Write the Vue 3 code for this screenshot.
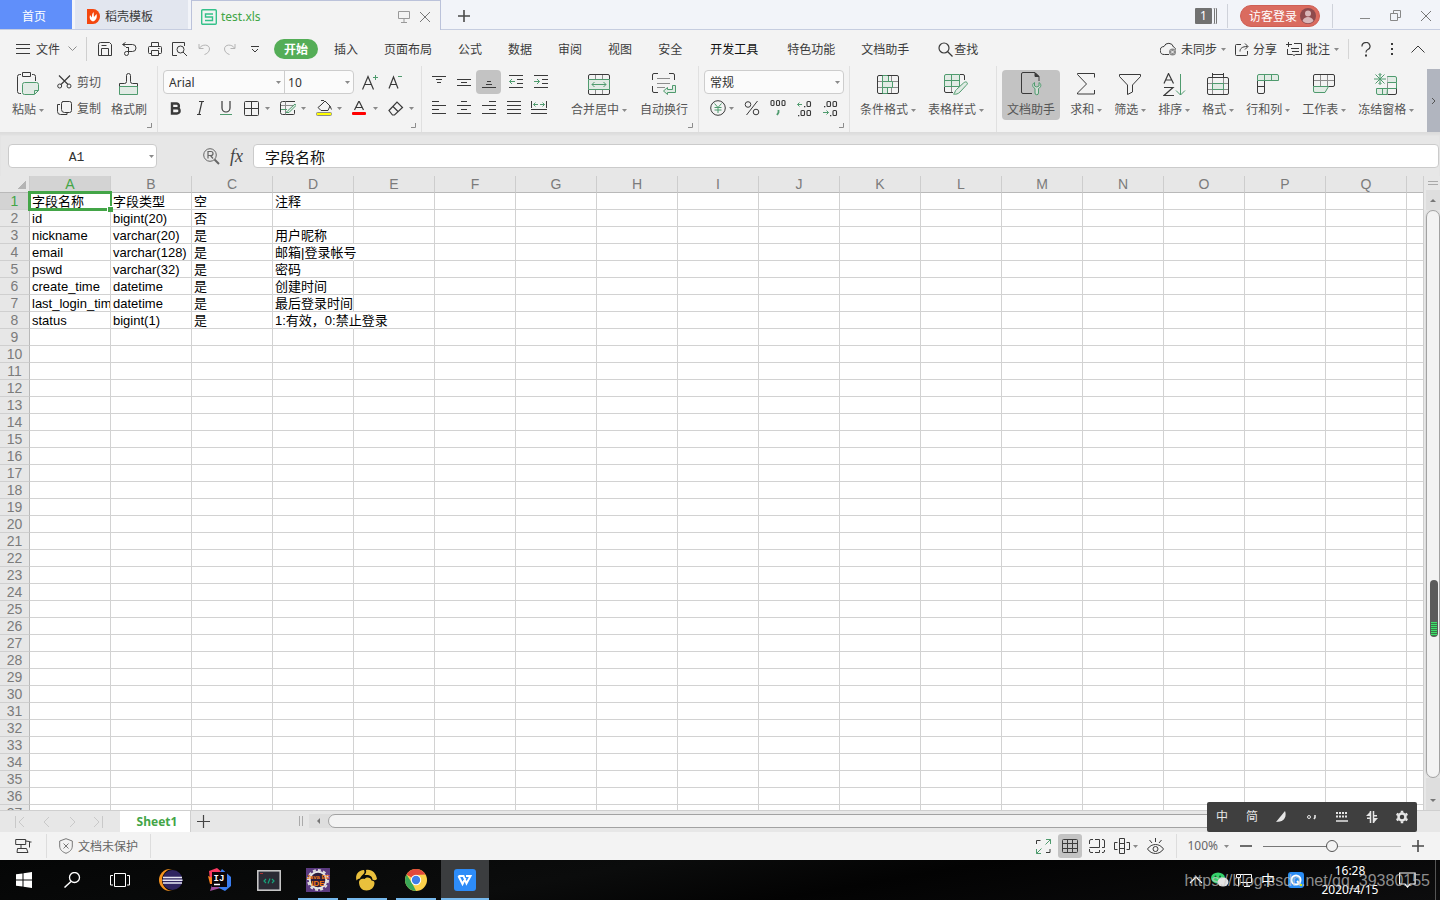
<script setup>
import { h, ref } from 'vue'

const K = '#3a3a3a'
const G = '#4f9b6e'
const F = '#e2ebe5'
const M = '#8c8c8c'

const icons = {
  burger: [14, 10, `<path d="M0 .5h14M0 4.500h14M0 9.500h14"/>`],
  down: [9, 6, `<path stroke="${M}" d="M.5.5l4 4 4-4"/>`],
  save: [14, 14, `<path d="M2.500.5h9l2 2v11h-13v-11a2 2 0 0 1 2-2zM3.500 13.500v-7h7v7M3.500 3.500h5"/>`],
  output: [15, 14, `<path d="M1 2.500h9.500a3 3 0 0 1 0 7H6M3.500.5l-3 2 3 2M6.500 5v6.500a2 2 0 1 1-2-2h2M4 5.500h3"/>`],
  print: [14, 14, `<path d="M3.500 4V.5h7V4M3.500 11.500h-2a1 1 0 0 1-1-1v-5a1 1 0 0 1 1-1h11a1 1 0 0 1 1 1v5a1 1 0 0 1-1 1h-2M3.500 8.500h7v5h-7zM10 6.500h1.500"/>`],
  preview: [16, 14, `<path d="M5 13.500H.5V.5h12V4"/><circle cx="8.500" cy="7.500" r="3.500"/><path d="M11 10l4 4"/>`],
  undo: [13, 12, `<path stroke="#b4b4b4" d="M1 1v4.500h4.500M1.500 5C4 1 11.500 1 11.500 6c0 3-3 5-5 5.500"/>`],
  redo: [13, 12, `<path stroke="#b4b4b4" d="M12 1v4.500H7.500M11.500 5C9 1 1.500 1 1.500 6c0 3 3 5 5 5.500"/>`],
  more: [8, 7, `<path d="M0 .5h8M1 3l3 3 3-3"/>`],
  search: [15, 15, `<circle cx="6" cy="6" r="5" stroke-width="1.200"/><path stroke-width="1.200" d="M9.500 9.500l5 5"/>`],
  cloud: [17, 14, `<path d="M9 12.500H4.500a4 4 0 0 1-.5-8A5 5 0 0 1 13.500 5c1.500.5 2 1.500 2 2.500"/><circle cx="12.500" cy="10" r="3.500" fill="#8a8a8a" stroke="none"/><path stroke="#fff" d="M11 8.500l3 3m0-3l-3 3"/>`],
  share: [14, 13, `<path d="M6 1.500H1.500a1 1 0 0 0-1 1v9a1 1 0 0 0 1 1h10a1 1 0 0 0 1-1V8M5 8.500c0-3 2-5 7.500-5M10 .5l3 3-3 3"/>`],
  comment: [16, 14, `<path d="M0 2.500h6M2.500 0v5M8 1.500h7.500v11h-6l-1.500 1-1.500-1H1.500V7M5 6.500h8M6 9.500h7"/>`],
  dots: [4, 12, `<g fill="${K}" stroke="none"><rect x="1" y="0" width="2" height="2"/><rect x="1" y="5" width="2" height="2"/><rect x="1" y="10" width="2" height="2"/></g>`],
  up: [14, 8, `<path d="M.5 7.500l6.500-6.500 6.500 6.500"/>`],
  help: [10, 15, `<path stroke-width="1.200" d="M1 4.500a4 3.800 0 1 1 5.500 3.300Q5 8.500 5 10.500"/><rect x="4" y="12.500" width="2" height="2" fill="${K}" stroke="none"/>`],
  paste: [23, 24, `<path d="M4 2.500H2.500a2 2 0 0 0-2 2v15a2 2 0 0 0 2 2H4M15 2.500h1.500a2 2 0 0 1 2 2V9M5.500.5h8v4h-8z"/><path stroke="${G}" fill="${F}" d="M7.500 10.500h12a2 2 0 0 1 2 2v6l-4 4h-10a2 2 0 0 1-2-2v-8a2 2 0 0 1 2-2zM17.500 22v-3.500h4"/>`],
  cut: [15, 14, `<path stroke-width="1.200" d="M2 .5l9 9M13 .5l-9 9"/><circle cx="2.700" cy="11" r="2"/><circle cx="12" cy="11" r="2"/>`],
  copy: [15, 15, `<path d="M5.500.5h7a2 2 0 0 1 2 2v7a2 2 0 0 1-2 2h-5a3 3 0 0 1-3-3v-6a2 2 0 0 1 2-2M3 3.500H.5v7a3 3 0 0 0 3 3H10V12"/>`],
  brush: [20, 23, `<path fill="${F}" stroke="${G}" d="M.5 13.500h18v8h-18z"/><path d="M.5 13.500v-3h5a2 2 0 0 0 2-2v-6a2 2 0 0 1 4 0v6a2 2 0 0 0 2 2h5v3"/><path stroke="${G}" d="M.5 13.500h18"/>`],
  fontup: [18, 17, `<path stroke-width="1.200" d="M.5 15.500L6 2.500l5.500 13M2.500 10.500h7"/><path stroke="${G}" d="M11 3.500h5M13.500 1v5"/>`],
  fontdown: [16, 17, `<path stroke-width="1.200" d="M1 14.500L5.500 3l4.500 11.500M2.500 10.500h6"/><path stroke="${G}" d="M10 2.500h4"/>`],
  bold: [11, 13, `<path stroke-width="2.400" d="M2 1.500h4.500a2.300 2.300 0 0 1 0 4.800H2zM2 6.300h5a2.600 2.600 0 0 1 0 5.200H2z"/>`],
  italic: [9, 14, `<path stroke-width="1.200" d="M3 .5h5M1 13.500h4M6 .5l-3 13"/>`],
  underline: [12, 15, `<path stroke-width="1.200" d="M2 0v7a4 4 0 0 0 8 0V0"/><path stroke="${G}" d="M0 13.500h12"/>`],
  border: [16, 15, `<rect x=".5" y=".5" width="14" height="14" rx="1"/><path d="M7.500.5v14M.5 7.500h14"/>`],
  tstyle: [16, 15, `<path d="M15 .5H2.500a2 2 0 0 0-2 2v9a2 2 0 0 0 2 2h11a1 1 0 0 0 1-1V9"/><path stroke="${M}" d="M5.500.5v13M1 4.500h13"/><path stroke="${G}" fill="${F}" d="M1 8.500h6M6 11.500h3l7-7-1-1.500-7 6.500z"/>`],
  fill: [16, 16, `<rect x=".5" y="12.500" width="15" height="3" rx="1" fill="#ff0" stroke="${M}"/><path d="M5 5l4-4 5 5-2 4.500H5L2 7.500zM5 .5h3M14 6l1.500 3.500"/>`],
  color: [14, 15, `<path stroke-width="1.200" d="M2.500 9L7 0l4.500 9M4 6.500h6"/><rect x="0" y="11" width="14" height="3" rx="1" fill="#f00" stroke="none"/>`],
  eraser: [16, 15, `<path stroke-width="1.200" d="M1 9.500l8-8.500 5.500 5.500-8 7.500H4.500zM5 5.500l5.500 5.500"/>`],
  atop: [14, 14, `<path d="M0 1.500h14M4 4.500h6M5 7.500h4"/>`],
  amid: [14, 14, `<path d="M0 4.500h14M4 7.500h6M0 10.500h14"/>`],
  abot: [14, 14, `<path d="M5 6.500h4M4 9.500h6M0 12.500h14"/>`],
  outdent: [15, 14, `<path d="M0 .5h14M8 4.500h6M8 8.500h6M0 12.500h14"/><path stroke="${G}" d="M6 6.500H.5M3 4l-2.500 2.500L3 9"/>`],
  indent: [15, 14, `<path d="M0 .5h14M8 4.500h6M8 8.500h6M0 12.500h14"/><path stroke="${G}" d="M0 6.500h5.500M3 4l2.500 2.500L3 9"/>`],
  left: [14, 14, `<path d="M0 .5h7M0 4.500h14M0 8.500h7M0 12.500h14"/>`],
  center: [14, 14, `<path d="M4 .5h6M0 4.500h14M4 8.500h6M0 12.500h14"/>`],
  right: [14, 14, `<path d="M7 .5h7M0 4.500h14M7 8.500h7M0 12.500h14"/>`],
  justify: [14, 14, `<path d="M0 .5h14M0 4.500h14M0 8.500h14M0 12.500h14"/>`],
  spread: [16, 14, `<path d="M.5 0v7M15.500 0v7M0 8.500h16M0 12.500h16"/><path stroke="${G}" d="M2.500 3.500H7M4.500 1.500l-2 2 2 2M9 3.500h4.500M11.500 1.500l2 2-2 2"/>`],
  merge: [22, 21, `<path d="M.5 5.500V2a1.500 1.500 0 0 1 1.500-1.500h18A1.500 1.500 0 0 1 21.500 2v3.500M.5 15.500V19a1.500 1.500 0 0 0 1.500 1.500h18a1.500 1.500 0 0 0 1.500-1.500v-3.500"/><path stroke="${M}" d="M7.500 1v4M14.500 1v4M7.500 16v4M14.500 16v4"/><path stroke="${G}" fill="${F}" d="M.5 5.500h21v10H.5zM4 10.500h14M6.500 8L4 10.500 6.500 13M15.500 8l2.500 2.500-2.500 2.500"/>`],
  wrap: [24, 22, `<path d="M.5 7V2A1.500 1.500 0 0 1 2 .5h4M17 .5h4A1.500 1.500 0 0 1 22.500 2v5M.5 13v5A1.500 1.500 0 0 0 2 19.500h4"/><path stroke="${M}" d="M5 5.500h13M5 10.500h13M5 14.500h8"/><path stroke="${G}" fill="${F}" d="M20.500 12.500h3v7h-8v2l-4-3.500 4-3.500v2h5z"/>`],
  yen: [16, 16, `<circle cx="8" cy="8" r="7.300"/><path stroke="${G}" d="M4.500 3.500L8 7.500l3.500-4M8 7.500v5.500M4.500 7.500h7M4.500 10h7"/>`],
  percent: [16, 16, `<circle cx="4" cy="4.500" r="2.800"/><circle cx="12" cy="12" r="2.800"/><path d="M13.500 1l-11 14"/>`],
  thousand: [16, 18, `<g stroke-width="1.100"><rect x="1" y="1.500" width="3" height="5" rx="1"/><rect x="6.500" y="1.500" width="3" height="5" rx="1"/><rect x="12" y="1.500" width="3" height="5" rx="1"/></g><path stroke="${G}" stroke-width="1.800" d="M8.500 11v2.500L7 16"/>`],
  decup: [16, 17, `<path stroke="${G}" d="M1.500 4.500H6M3.500 2.500l-2 2 2 2"/><g stroke-width="1.100"><rect x="11" y="1.500" width="3.500" height="5" rx="1"/><rect x="5" y="10.500" width="3.500" height="5" rx="1"/><rect x="11" y="10.500" width="3.500" height="5" rx="1"/></g><g fill="${K}" stroke="none"><rect x="8" y="6" width="1.300" height="1.300"/><rect x="2" y="15" width="1.300" height="1.300"/></g>`],
  decdown: [16, 17, `<path stroke="${G}" d="M1 12.500h5.500M4.500 10.500l2 2-2 2"/><g stroke-width="1.100"><rect x="11" y="10.500" width="3.500" height="5" rx="1"/><rect x="5" y="1.500" width="3.500" height="5" rx="1"/><rect x="11" y="1.500" width="3.500" height="5" rx="1"/></g><g fill="${K}" stroke="none"><rect x="8" y="15" width="1.300" height="1.300"/><rect x="2" y="6" width="1.300" height="1.300"/></g>`],
  cond: [22, 19, `<path stroke="${M}" d="M14.500 1v17M1 6.500h20M1 12.500h20"/><path fill="${F}" stroke="${G}" d="M5.500.5h6v6h-6zM5.500 6.500h10v6h-10zM5.500 12.500h5v6h-5z"/><rect x=".5" y=".5" width="21" height="18" rx="1.500"/><path stroke="${G}" d="M5.500.5h5M5.500 18.500h5"/>`],
  tfmt: [24, 21, `<path d="M16 .5h3a1.500 1.500 0 0 1 1.500 1.500v4M.5 13v4A1.500 1.500 0 0 0 2 18.500h7"/><path stroke="${G}" fill="${F}" d="M15.500.5v12H.5V2A1.500 1.500 0 0 1 2 .5zM7.500.5v12M.5 6.500h15"/><path stroke="${M}" d="M7.500 13v5"/><path stroke="${G}" fill="${F}" d="M23 8.500c1 1 0 2-1 3l-6 6.500c-2 2-4 2.500-6.500 2 2-1 1-3 3-4.500l7-6.500c1.500-1.200 2.500-1.500 3.500-.5z"/>`],
  dochelp: [21, 24, `<path d="M11 21.500H2a1.500 1.500 0 0 1-1.500-1.500V2A1.500 1.500 0 0 1 2 .5h12l4 4V9"/><path fill="${K}" d="M14 1v3.500h4z"/><path stroke="${G}" fill="#d3ddd6" d="M13.500 10.500c-2.500 1.500-2.500 4.500.5 6v4.500a1.700 1.700 0 0 0 3.500 0v-4.500c3-1.500 3-4.500.5-6v3.500l-2.200 1-2.300-1z"/>`],
  sum: [18, 22, `<path d="M17.500 4.500V.5H.5v1l9 9.500-9 9v1h17V17"/>`],
  filter: [22, 21, `<path d="M.5.5h21v2l-8 8.500v7l-5 2.500V11l-8-8.500z"/>`],
  sort: [23, 23, `<path stroke-width="1.200" d="M1 10.500L5.500.5l5 10M2.500 7h6.500M1 14.500h9L1 22.500h10"/><path stroke="${G}" d="M17.500 1v21M13 17.500l4.500 4.500 4.500-4.500"/>`],
  fmt: [22, 22, `<path d="M5.500 0v4M16.500 0v4M5 1.500h12"/><path stroke="${M}" d="M5.500 5v16M16.500 5v16M1 10.500h20M1 16.500h20"/><rect x=".5" y="4.500" width="21" height="17" rx="1.500"/><rect x="5.500" y="10.500" width="11" height="6" stroke="${G}" fill="${F}"/>`],
  rowcol: [22, 20, `<path d="M.5 6.500V18A1.500 1.500 0 0 0 2 19.500h4A1.500 1.500 0 0 0 7.500 18V7M.5 12.500h7"/><path stroke="${G}" fill="${F}" d="M2 .5h18A1.500 1.500 0 0 1 21.500 2v4.500H.5V2A1.500 1.500 0 0 1 2 .5zM7.500.5v6M14.500.5v6"/>`],
  sheet: [22, 20, `<path stroke="${M}" d="M7.500 1v11M14.500 1v11M1 6.500h20"/><path d="M.5 12.500V2A1.500 1.500 0 0 1 2 .5h18A1.500 1.500 0 0 1 21.500 2v9a1.500 1.500 0 0 1-1.500 1.500h-5"/><path stroke="${G}" fill="${F}" d="M.5 12.500h15l-3.500 6H2A1.500 1.500 0 0 1 .5 17z"/>`],
  freeze: [24, 23, `<path stroke="${M}" d="M13.500 3v18M13 9.500h9"/><path d="M13.500 21.500H21a1.500 1.500 0 0 0 1.500-1.500v-5"/><path stroke="${G}" fill="${F}" d="M13.500 3.500H21A1.500 1.500 0 0 1 22.500 5v4.500h-9M13.500 15.500h-11V20A1.500 1.500 0 0 0 4 21.500h9zM8.500 15.500v6"/><path stroke="${G}" d="M22.500 9.500v6h-9M6 0v12M0 6h12M1.500 1.500l9 9M10.500 1.500l-9 9M4.500 1L6 2.500 7.500 1M4.500 11L6 9.500 7.500 11"/>`],
  template: [13, 15, `<path stroke="none" fill="#f4470f" d="M0 0h6a7 7.500 0 0 1 0 15H0z"/><path stroke="none" fill="#fff" d="M6 12.500c-3-1-4-3.500-3-6.500l2 2.500c0-2 0-4 1.500-5.500.5 2 0 3 .5 5L9.500 5C10.500 8.500 9 11.500 6 12.500z"/>`],
  xls: [16, 16, `<rect x=".7" y=".7" width="14.600" height="14.600" rx="1" stroke="#35c18a" stroke-width="1.400"/><path stroke="#35c18a" stroke-width="1.400" d="M12 5H4.500v3h7v3.500H4"/>`],
  monitor: [12, 12, `<path stroke="#999" d="M.5.5h11v7H.5zM6 8v3M3 11.500h6"/>`],
  close: [12, 12, `<path stroke="#777" d="M1 1l10 10M11 1L1 11"/>`],
  plus: [12, 12, `<path stroke="#4a4a4a" stroke-width="1.600" d="M6 0v12M0 6h12"/>`],
  plusthin: [14, 14, `<path stroke="#444" stroke-width="1.200" d="M6.500 0v13M0 6.500h13"/>`],
  minus: [12, 12, `<path stroke="#4a4a4a" stroke-width="1.600" d="M0 6h12"/>`],
  min: [10, 12, `<path stroke="#888" d="M0 8.500h10"/>`],
  restore: [12, 12, `<path stroke="#888" d="M3.500 3V.5h7v7H8M.5 3.500h7v7h-7z"/>`],
  person: [16, 16, `<circle cx="8" cy="8" r="8" fill="#8e4a4d" stroke="none"/><circle cx="8" cy="5.500" r="3" fill="#d8b6b8" stroke="none"/><path fill="#d8b6b8" stroke="none" d="M2.500 13c1-3 3-4 5.500-4s4.500 1 5.500 4a8 8 0 0 1-11 0z"/>`],
  find: [17, 17, `<circle cx="7" cy="7" r="6.300" stroke="#666"/><path stroke="#666" stroke-width="1.200" d="M5 10.500v-7h3a2 2 0 0 1 0 4H5M7.500 7.500l2.500 3"/><path stroke="#666" stroke-width="2" d="M11.500 11.500l4.500 4.500"/>`],
  caret: [5, 3, `<path fill="#8a8a8a" stroke="none" d="M0 0h5L2.500 3z"/>`],
  next: [6, 8, `<path stroke="#555" d="M1 1l3 3-3 3"/>`],
  corner: [5, 5, `<path stroke="${M}" d="M4.500 0v4.500H0"/>`],
  first: [10, 12, `<path stroke="#c9c9c9" d="M.5 0v12M9 1L4 6l5 5"/>`],
  prev: [7, 12, `<path stroke="#c9c9c9" d="M6 1L1 6l5 5"/>`],
  nextp: [7, 12, `<path stroke="#c9c9c9" d="M1 1l5 5-5 5"/>`],
  last: [10, 12, `<path stroke="#c9c9c9" d="M9.500 0v12M1 1l5 5-5 5"/>`],
  robot: [17, 16, `<path d="M.7 1.500h10v5h-10zM10.500 3l4 .5v6M6 7v3.500M2.500 10.500h9l1.500 4h-11zM14.500 4h2"/>`],
  shield: [14, 16, `<path stroke="#777" d="M7 .7l6.300 2.300v5c0 4-3 6-6.300 7.300C3.700 14 .7 12 .7 8V3zM4.500 5.500l5 5M9.500 5.500l-5 5"/>`],
  full: [15, 15, `<path d="M.5 5V1.500h4M14 10v3.500h-4"/><path stroke="${G}" d="M9.500 5.500l5-5M10 .5h4.500V5M5.500 9.500l-5 5M.5 10v4.500H5"/>`],
  grid: [17, 15, `<rect x=".5" y=".5" width="15" height="13" rx="1"/><path d="M5.500.5v13M10.500.5v13M.5 4.500h15M.5 9.500h15"/>`],
  page: [17, 15, `<path d="M.5 5V2A1.500 1.500 0 0 1 2 .5h2M6 .5h4.500v8H.5M.5 10v2a1.500 1.500 0 0 0 1.500 1.500h2M6 13.500h4.500V11M13 .5h1a1.500 1.500 0 0 1 1.500 1.500v6.500H13M13 13.500h1a1.500 1.500 0 0 0 1.500-1.500v-1"/>`],
  breakv: [17, 16, `<path d="M5.500.5h5v15h-5zM5.500 5.500h5M5.500 10.500h5M3.500 4.500h-3v7h3M12.500 4.500h3v7h-3"/>`],
  eye: [17, 17, `<path d="M.5 11c4-6 12-6 16 0-4 6-12 6-16 0zM8.500 0v4M2.500 2l2.500 3M14.500 2L12 5"/><circle cx="8.500" cy="11" r="2.500"/>`],
  win: [16, 16, `<path fill="#fff" stroke="none" d="M0 2.300l6.500-.9v6.100H0zM7.500 1.200L16 0v7.500H7.500zM0 8.500h6.500v6.100L0 13.700zM7.500 8.500H16V16l-8.500-1.200z"/>`],
  tsearch: [17, 16, `<circle cx="10.500" cy="5.500" r="5" stroke="#fff" stroke-width="1.300"/><path stroke="#fff" stroke-width="1.500" d="M7 9.500L.5 15.500"/>`],
  tview: [21, 15, `<path stroke="#fff" d="M4.500.5h11v13h-11zM3 2.500H.5v9.500H3M17 2.500h2.500v9.500H17"/>`],
  eclipse: [24, 22, `<circle cx="11" cy="11" r="11" fill="#f7931e" stroke="none"/><circle cx="14" cy="11" r="11" fill="#070808" stroke="none"/><circle cx="13.500" cy="11" r="10" fill="#2f2460" stroke="none"/><path stroke="#e6e6f2" stroke-width="1.500" d="M4 8.500h19M3.500 11.300h20M4 14h19"/>`],
  ij: [24, 24, `<g stroke="none"><path fill="#fc3a63" d="M1 3l8-3 7 6-4 6H2z"/><path fill="#fc801d" d="M0 8l8 3v5H2z"/><path fill="#a3509f" d="M5 14h8l3 5-14 4z"/><path fill="#3a7df0" d="M11 6l3-5 9 8v9l-6 5-6-3z"/><rect x="4" y="4" width="15" height="15" fill="#0b0508"/></g><text x="5.500" y="12.500" font-size="9" font-weight="700" fill="#fff" font-family="Liberation Mono" stroke="none">IJ</text><path stroke="#fff" stroke-width="1.500" d="M6 16.500h6"/>`],
  term: [24, 21, `<rect x=".8" y=".8" width="22.400" height="19.400" fill="#2b2b35" stroke="#cfcfcf" stroke-width="1.500"/><path stroke="#a33" d="M3 3.500h3"/><path stroke="#16a37c" stroke-width="1.200" d="M9 9l-2 2 2 2M15 9l2 2-2 2M13 8.500l-2 5"/>`],
  javaee: [24, 24, `<rect width="24" height="24" fill="#5b3a80" stroke="none"/><circle cx="12" cy="12" r="10" stroke="#ddd" stroke-width="2" stroke-dasharray="3 2.200"/><circle cx="12" cy="12" r="8.300" fill="#2a1c3c" stroke="#e5e5e5" stroke-width="2"/><g font-family="Liberation Sans" font-weight="700" fill="#f47b14" stroke="none" text-anchor="middle"><text x="12" y="11" font-size="6">Java EE</text><text x="12" y="18" font-size="8">IDE</text></g>`],
  navicat: [24, 22, `<g stroke="none" fill="#eac03c"><path d="M1.500 11.500C0 5.500 3 1.500 9 1c1 2 .5 3-1 4.500S5 8.500 5 9.500c-1.500 0-2.500.8-3.500 2z"/><path d="M11 1c6-1 10 3 11 9-1.500 1.500-3 1.500-4.500.5C17 7 15 5.500 9.500 6 11 4.500 11.500 3 11 1z"/><path d="M4 13c0-2.500 3-4 5.500-3 1.500-2.500 6.500-2 7 1.500 1.500 0 3 .8 3 2.500 0 4.500-3.500 7.500-8 7.500S4 18 4 13z"/></g>`],
  chrome: [22, 22, `<g stroke="none"><circle cx="11" cy="11" r="11" fill="#fdd24a"/><path fill="#e2483b" d="M11 11L1.500 5.500a11 11 0 0 1 19 0L11 6z"/><path fill="#3aa757" d="M1.500 5.500L7 14l4 8A11 11 0 0 1 1.500 5.500z"/><path fill="#e2483b" d="M1.500 5.500L11 5.500v5z"/><circle cx="11" cy="11" r="5.200" fill="#fff"/><circle cx="11" cy="11" r="4.200" fill="#3f7ee8"/></g>`],
  wps: [22, 22, `<rect width="22" height="22" rx="3" fill="#2d8cf8" stroke="none"/><path stroke="#fff" stroke-width="2" d="M4.500 7h5l3 7.500L16.500 7H12M4.500 7l4 8 3-6"/>`],
  tup: [15, 8, `<path stroke="#fff" stroke-width="1.300" d="M1 7l6-6 6 6"/>`],
  wechat: [18, 16, `<ellipse cx="7" cy="6" rx="7" ry="5.500" fill="#35d26b" stroke="none"/><ellipse cx="12" cy="10" rx="5.500" ry="4.500" fill="#e4e4e4" stroke="none"/><g fill="#145c2e" stroke="none"><circle cx="4.500" cy="4.500" r="1"/><circle cx="9" cy="4.500" r="1"/></g>`],
  net: [17, 15, `<path stroke="#fff" d="M4.500 1.500h11v8h-11M8 13.500h6M11 10v3M.5 1.500h4v3h-4zM2.500 5v8.500"/>`],
  qapp: [16, 16, `<rect width="16" height="16" rx="3" fill="#2a8cf4" stroke="none"/><circle cx="8" cy="8" r="4.500" stroke="#fff" stroke-width="2"/><path stroke="#fff" stroke-width="2" d="M9 9l3 3"/><rect x="12" y="12" width="2" height="2" fill="#d3e623" stroke="none"/>`],
  notify: [17, 16, `<path stroke="#fff" stroke-width="1.200" d="M.6 1h15.500v11H11l-2.500 3L6 12H.6z"/>`],
  moon: [12, 12, `<path fill="#e6e6e6" stroke="none" d="M9 0c2 5-1 10-5 10.500L0 11z"/>`],
  punct: [10, 8, `<circle cx="2" cy="4" r="1.500" stroke="#e6e6e6"/><path stroke="#e6e6e6" stroke-width="1.600" d="M8 2v2.500L7 6"/>`],
  keys: [12, 10, `<path stroke="#e6e6e6" stroke-width="2" stroke-dasharray="2 1" d="M0 1h11M0 4.500h11"/><path stroke="#e6e6e6" stroke-width="1.500" d="M0 9h12"/>`],
  swap: [12, 12, `<path stroke="#e6e6e6" stroke-width="1.500" d="M4.500 0v12M7.500 12V0"/><path stroke="none" fill="#e6e6e6" d="M0 5l4-4v4zM1 6.500h3V8H1zM12 7l-4 4.500V7zM8 4h3v1.500H8z"/>`],
  gear: [14, 14, `<circle cx="7" cy="7" r="3.500" stroke="#e6e6e6" stroke-width="2.500"/><path stroke="#e6e6e6" stroke-width="2.500" d="M7 .8v2M7 11.200v2M1.600 3.900l1.800 1M10.600 9.100l1.800 1M1.600 10.100l1.800-1M10.600 4.900l1.800-1"/>`]
}

const Icon = (props) => {
  const [w, ht, body] = icons[props.n]
  return h('svg', { width: w, height: ht, viewBox: `0 0 ${w} ${ht}`, fill: 'none', stroke: K, innerHTML: body, 'aria-hidden': 'true', class: 'ic' })
}
Icon.props = ['n']

const quick = [['save', '保存'], ['output', '输出'], ['print', '打印'], ['preview', '打印预览'], ['undo', '撤销'], ['redo', '恢复'], ['more', '更多']]
const tabsA = ['插入', '页面布局', '公式', '数据', '审阅', '视图', '安全']
const tabsB = ['特色功能', '文档助手']
const fontBtns = [['border', '边框'], ['tstyle', '单元格样式'], ['fill', '填充颜色'], ['color', '字体颜色'], ['eraser', '清除']]
const alignTop = [['atop', '顶端对齐'], ['amid', '垂直居中'], ['abot', '底端对齐']]
const alignLow = [['left', '左对齐'], ['center', '水平居中'], ['right', '右对齐'], ['justify', '两端对齐'], ['spread', '分散对齐']]
const bigTools = [['sum', '求和'], ['filter', '筛选'], ['sort', '排序'], ['fmt', '格式'], ['rowcol', '行和列'], ['sheet', '工作表'], ['freeze', '冻结窗格']]

const cols = 'ABCDEFGHIJKLMNOPQ'.split('')
const data = [
  ['字段名称', '字段类型', '空', '注释'],
  ['id', 'bigint(20)', '否', ''],
  ['nickname', 'varchar(20)', '是', '用户昵称'],
  ['email', 'varchar(128)', '是', '邮箱|登录帐号'],
  ['pswd', 'varchar(32)', '是', '密码'],
  ['create_time', 'datetime', '是', '创建时间'],
  ['last_login_time', 'datetime', '是', '最后登录时间'],
  ['status', 'bigint(1)', '是', '1:有效，0:禁止登录']
]
const spill = [4, 8]
const cell = (r, c) => (data[r - 1] && data[r - 1][c]) || ''

const cellName = ref('A1')
const formula = ref('字段名称')
const zoom = ref(50)
const tasks = [['eclipse', 'Eclipse', ''], ['ij', 'IntelliJ IDEA', ''], ['term', '终端', ''], ['javaee', 'Java EE IDE', 'open'], ['navicat', 'Navicat', 'open'], ['chrome', 'Chrome', 'open'], ['wps', 'WPS', 'open current']]
</script>

<template>
  <div class="app">
    <header class="titlebar">
      <button class="home">首页</button>
      <button class="doc"><Icon n="template" /><span class="cn">稻壳模板</span></button>
      <div class="doc current">
        <Icon n="xls" /><span class="fname">test.xls</span>
        <button aria-label="窗口"><Icon n="monitor" /></button>
        <button class="shut" aria-label="关闭标签"><Icon n="close" /></button>
      </div>
      <button class="newtab" aria-label="新建"><Icon n="plus" /></button>
      <div class="winside">
        <span class="count">1</span>
        <i class="tsep"></i>
        <button class="login"><span class="cn">访客登录</span><Icon n="person" /></button>
        <i class="tsep"></i>
        <button class="wbtn" aria-label="最小化"><Icon n="min" /></button>
        <button class="wbtn" aria-label="还原"><Icon n="restore" /></button>
        <button class="wbtn" aria-label="关闭"><Icon n="close" /></button>
      </div>
    </header>

    <nav class="menubar">
      <button class="file"><Icon n="burger" /><span class="cn">文件</span><Icon n="down" /></button>
      <div class="quick">
        <button v-for="q in quick" :key="q[0]" :aria-label="q[1]"><Icon :n="q[0]" /></button>
      </div>
      <button class="pill"><span class="cn">开始</span></button>
      <div class="tabs">
        <button v-for="t in tabsA" :key="t"><span class="cn">{{ t }}</span></button>
        <button class="dev"><span class="cn">开发工具</span></button>
        <button v-for="t in tabsB" :key="t"><span class="cn">{{ t }}</span></button>
        <button class="look"><Icon n="search" /><span class="cn">查找</span></button>
      </div>
      <div class="share">
        <button><Icon n="cloud" /><span class="cn">未同步</span><Icon n="caret" /></button>
        <button><Icon n="share" /><span class="cn">分享</span></button>
        <button><Icon n="comment" /><span class="cn">批注</span><Icon n="caret" /></button>
        <i class="msep"></i>
        <button class="hp" aria-label="帮助"><Icon n="help" /></button>
        <button class="hp" aria-label="更多选项"><Icon n="dots" /></button>
        <button class="hp" aria-label="收起"><Icon n="up" /></button>
      </div>
    </nav>

    <section class="ribbon">
      <div class="group g1">
        <button class="big"><span class="pic"><Icon n="paste" /></span><span class="lab">粘贴<Icon n="caret" /></span></button>
        <div class="stack">
          <button class="small"><Icon n="cut" /><span class="cn">剪切</span></button>
          <button class="small"><Icon n="copy" /><span class="cn">复制</span></button>
        </div>
        <button class="big"><span class="pic"><Icon n="brush" /></span><span class="lab">格式刷</span></button>
        <span class="corner"><Icon n="corner" /></span>
      </div>
      <div class="group g2">
        <div class="stack">
          <div class="line">
            <div class="combo">
              <span class="sel font"><select aria-label="字体"><option>Arial</option></select><Icon n="caret" /></span>
              <span class="sel size"><select aria-label="字号"><option>10</option></select><Icon n="caret" /></span>
            </div>
            <button class="fs" aria-label="增大字号"><Icon n="fontup" /></button>
            <button class="fs" aria-label="减小字号"><Icon n="fontdown" /></button>
          </div>
          <div class="line">
            <button class="sq" aria-label="加粗"><Icon n="bold" /></button>
            <button class="sq" aria-label="斜体"><Icon n="italic" /></button>
            <button class="sq" aria-label="下划线"><Icon n="underline" /></button>
            <div class="fontbtns">
              <button v-for="b in fontBtns" :key="b[0]" :aria-label="b[1]"><Icon :n="b[0]" /><Icon n="caret" /></button>
            </div>
          </div>
        </div>
        <span class="corner"><Icon n="corner" /></span>
      </div>
      <div class="group g3">
        <div class="stack">
          <div class="line">
            <button v-for="a in alignTop" :key="a[0]" class="sq" :class="{ on: a[0] === 'abot' }" :aria-label="a[1]"><Icon :n="a[0]" /></button>
            <span class="indents">
              <button class="sq" aria-label="减少缩进"><Icon n="outdent" /></button>
              <button class="sq" aria-label="增加缩进"><Icon n="indent" /></button>
            </span>
          </div>
          <div class="line">
            <button v-for="a in alignLow" :key="a[0]" class="sq" :aria-label="a[1]"><Icon :n="a[0]" /></button>
          </div>
        </div>
        <button class="big merge"><span class="pic"><Icon n="merge" /></span><span class="lab">合并居中<Icon n="caret" /></span></button>
        <button class="big"><span class="pic"><Icon n="wrap" /></span><span class="lab">自动换行</span></button>
        <span class="corner"><Icon n="corner" /></span>
      </div>
      <div class="group g4">
        <div class="stack">
          <div class="combo"><span class="sel num"><select aria-label="数字格式"><option>常规</option></select><Icon n="caret" /></span></div>
          <div class="line nums">
            <button aria-label="货币"><Icon n="yen" /><Icon n="caret" /></button>
            <button aria-label="百分比"><Icon n="percent" /></button>
            <button aria-label="千位分隔"><Icon n="thousand" /></button>
            <button aria-label="增加小数位"><Icon n="decup" /></button>
            <button aria-label="减少小数位"><Icon n="decdown" /></button>
          </div>
        </div>
        <span class="corner"><Icon n="corner" /></span>
      </div>
      <div class="group g5">
        <button class="big"><span class="pic"><Icon n="cond" /></span><span class="lab">条件格式<Icon n="caret" /></span></button>
        <button class="big"><span class="pic"><Icon n="tfmt" /></span><span class="lab">表格样式<Icon n="caret" /></span></button>
      </div>
      <div class="group g6">
        <button class="big helper"><span class="pic"><Icon n="dochelp" /></span><span class="lab">文档助手</span></button>
        <div class="tools">
          <button v-for="b in bigTools" :key="b[0]" class="big"><span class="pic"><Icon :n="b[0]" /></span><span class="lab">{{ b[1] }}<Icon n="caret" /></span></button>
        </div>
      </div>
      <button class="scroller" aria-label="更多工具"><Icon n="next" /></button>
    </section>

    <section class="formulabar">
      <div class="namebox"><input v-model="cellName" aria-label="名称框"><Icon n="caret" /></div>
      <button class="find" aria-label="浏览公式结果"><Icon n="find" /></button>
      <button class="fx" aria-label="插入函数">fx</button>
      <input v-model="formula" class="formula" aria-label="编辑栏">
    </section>

    <main class="work">
      <div class="gridwrap">
        <table>
          <colgroup><col class="rh"><col v-for="c in cols" :key="c" class="cc"><col></colgroup>
          <thead>
            <tr>
              <th class="selall"></th>
              <th v-for="c in cols" :key="c" scope="col" :class="{ hot: c === 'A' }">{{ c }}</th>
              <th class="end"></th>
            </tr>
          </thead>
          <tbody>
            <tr v-for="r in 37" :key="r">
              <th scope="row" :class="{ hot: r === 1 }">{{ r }}</th>
              <td v-for="(c, i) in cols" :key="c" :class="{ spill: i === 3, open: i === 3 && spill.includes(r), sel: r === 1 && i === 0 }">{{ cell(r, i) }}</td>
              <td class="end"></td>
            </tr>
          </tbody>
        </table>
      </div>
      <div class="vscroll">
        <span class="split"></span>
        <button class="arrow" aria-label="向上"><i class="tri"></i></button>
        <div class="thumb"></div>
        <button class="arrow low" aria-label="向下"><i class="tri dn"></i></button>
      </div>
    </main>

    <section class="sheetbar">
      <div class="navs">
        <button aria-label="第一张"><Icon n="first" /></button>
        <button aria-label="上一张"><Icon n="prev" /></button>
        <button aria-label="下一张"><Icon n="nextp" /></button>
        <button aria-label="最后一张"><Icon n="last" /></button>
      </div>
      <button class="sheettab">Sheet1</button>
      <button class="addsheet" aria-label="新建工作表"><Icon n="plusthin" /></button>
      <span class="hsplit"></span>
      <div class="hscroll">
        <button aria-label="向左"><i class="tri lf"></i></button>
        <div class="hthumb"></div>
      </div>
    </section>

    <footer class="status">
      <button class="bot" aria-label="助手"><Icon n="robot" /></button>
      <span class="prot"><Icon n="shield" /><span class="cn">文档未保护</span></span>
      <div class="views">
        <button aria-label="全屏"><Icon n="full" /></button>
        <button class="on" aria-label="普通视图"><Icon n="grid" /></button>
        <button aria-label="页面布局"><Icon n="page" /></button>
        <button class="brk" aria-label="分页预览"><Icon n="breakv" /><Icon n="caret" /></button>
        <button aria-label="护眼模式"><Icon n="eye" /></button>
      </div>
      <div class="zoombox">
        <button class="pct">100%<Icon n="caret" /></button>
        <button aria-label="缩小"><Icon n="minus" /></button>
        <input v-model="zoom" type="range" min="0" max="100" aria-label="缩放">
        <button aria-label="放大"><Icon n="plus" /></button>
      </div>
    </footer>

    <footer class="taskbar">
      <button class="t" aria-label="开始菜单"><Icon n="win" /></button>
      <button class="t" aria-label="搜索"><Icon n="tsearch" /></button>
      <button class="t" aria-label="任务视图"><Icon n="tview" /></button>
      <div class="apps">
        <button v-for="t in tasks" :key="t[0]" class="t" :class="t[2]" :aria-label="t[1]"><Icon :n="t[0]" /></button>
      </div>
      <div class="tray">
        <Icon n="tup" /><Icon n="wechat" /><Icon n="net" /><span class="zh">中</span><Icon n="qapp" />
        <div class="clock"><span>16:28</span><span>2020/4/15</span></div>
        <Icon n="notify" />
        <i class="peek"></i>
      </div>
      <span class="mark">https://blog.csdn.net/qq_39380155</span>
    </footer>

    <div class="ime">
      <span>中</span><span>简</span><span><Icon n="moon" /></span><span><Icon n="punct" /></span><span><Icon n="keys" /></span><span><Icon n="swap" /></span><span><Icon n="gear" /></span>
    </div>
    <div class="gauge"><i></i></div>
  </div>
</template>

<style>
body { background: #f3f3f3; overflow: hidden; }
.ic { display: block; flex: none; }
</style>

<style scoped>
.app { position: relative; display: flex; flex-direction: column; height: 100vh; overflow: hidden; font: 12px/16px "Noto Sans", "Noto Sans CJK SC", sans-serif; color: #3b3b3b; background: #f3f3f3; }
.app * { box-sizing: border-box; }
button { display: flex; align-items: center; justify-content: center; border: 0; padding: 0; margin: 0; background: none; color: inherit; font: inherit; white-space: nowrap; flex: none; }
.cn { padding-top: 2px; }

.titlebar { display: flex; flex: none; height: 30px; background: #f2f4f9; box-shadow: inset 0 -1px #c6cde0; }
.home { width: 72px; height: 29px; background: #608ffa; color: #fff; padding-right: 4px; padding-top: 4px; }
.doc { display: flex; align-items: center; justify-content: flex-start; gap: 5px; width: 113px; height: 29px; margin-left: 3px; padding: 3px 0 0 12px; background: #e2e6ef; }
.doc.current { position: relative; width: 250px; height: 30px; padding: 3px 9px 0; background: #f3f3f3; border: 1px solid #bbc2da; border-bottom: 0; gap: 4px; }
.shut { margin-left: 5px; }
.fname { flex: 1; color: #40a544; }
.newtab { width: 46px; padding-top: 2px; }
.winside { display: flex; align-items: center; margin-left: auto; height: 31px; padding-right: 8px; }
.count { width: 17px; height: 16px; margin-right: 15px; background: #717171; color: #fff; text-align: center; border-radius: 1px; box-shadow: 2px 0 #f2f4f9, 3px 0 #777, 4px 0 #f2f4f9, 5px 0 #777; }
.tsep { width: 1px; height: 24px; background: #cfd2da; }
.login { gap: 3px; height: 22px; margin: 0 12px; padding: 0 3px 0 8px; border: 1px solid #cf5f55; border-radius: 11px; background: #da6b5f; color: #fff; }
.wbtn { width: 31px; height: 28px; }
.tsep + .wbtn { margin-left: 16px; }
.wbtn:last-child { width: 12px; margin-left: 9px; }

.menubar { display: flex; flex: none; align-items: center; height: 36px; padding: 2px 15px 0 16px; white-space: nowrap; }
.file { height: 24px; padding-right: 9px; border-right: 1px solid #cfcfcf; }
.file span { margin: 0 8px 0 6px; }
.quick { display: flex; margin-left: 5px; }
.quick button { width: 25px; height: 24px; }
.pill { height: 20px; margin: 0 16px 0 7px; padding: 0 10px; border-radius: 10px; background: #54ad57; color: #fff; font-weight: 700; }
.tabs { display: flex; gap: 26px; }
.dev { color: #111; margin: 0 3px 0 2px; }
.look { gap: 1px; margin-left: 3px; }
.share { display: flex; align-items: center; margin-left: auto; }
.share button { gap: 4px; margin-right: 9px; }
.msep { width: 1px; height: 20px; background: #d5d5d5; }
.share .hp { width: 10px; margin: 0 0 0 12px; }
.share .hp + .hp { margin-left: 16px; }
.share .hp:last-child { width: 14px; margin-left: 14px; }

.ribbon { display: flex; flex: none; height: 66px; }
.group { position: relative; display: flex; flex: none; padding-top: 4px; border-right: 1px solid #e0e0e0; }
.g1 { padding-left: 12px; padding-right: 10px; }
.g1 .stack { margin: 0 10px 0 13px; }
.g2 { padding-left: 5px; padding-right: 7px; }
.g3 { padding-left: 4px; padding-right: 10px; }
.g4 { padding-left: 5px; padding-right: 5px; }
.g5 { padding-left: 10px; padding-right: 12px; gap: 12px; }
.g6 { flex: 1; padding-left: 5px; gap: 10px; border: 0; }
.tools { display: flex; gap: 12px; }
.big { display: block; height: 50px; border-radius: 4px; }
.pic { display: flex; align-items: center; justify-content: center; height: 28px; }
.lab { display: flex; align-items: center; line-height: 24px; color: #555; }
.lab .ic, .fontbtns .ic + .ic, .nums .ic + .ic { margin-left: 3px; }
.big.helper { padding: 0 5px; background: #c3c3c3; }
.stack { display: flex; flex-direction: column; gap: 2px; }
.line { display: flex; align-items: center; height: 24px; }
.small { gap: 5px; height: 24px; color: #555; }
.corner { position: absolute; right: 5px; bottom: 4px; }
.combo { display: flex; height: 24px; border: 1px solid #cdcdcd; border-radius: 4px; background: #fbfbfb; }
.sel { position: relative; display: flex; align-items: center; }
.sel select { appearance: none; width: 100%; height: 22px; border: 0; padding: 1px 5px 0; background: none; font: inherit; color: #333; outline: 0; }
.sel .ic { position: absolute; right: 3px; }
.font { width: 120px; }
.size { width: 69px; border-left: 1px solid #cdcdcd; }
.size select { padding-left: 3px; }
.num { width: 138px; }
.fs { width: 17px; margin-left: 8px; }
.sq { width: 25px; height: 24px; }
.sq.on { background: #c3c3c3; border-radius: 4px; }
.indents { display: flex; margin-left: 3px; }
.fontbtns { display: flex; gap: 10px; margin-left: 6px; }
.fontbtns button { width: 26px; justify-content: space-between; }
.merge { margin: 0 13px 0 17px; }
.nums { gap: 10px; padding-left: 6px; }
.scroller { width: 13px; margin-top: 3px; background: #b1b5bf; align-self: stretch; }

.formulabar { display: flex; flex: none; align-items: center; height: 44px; padding: 3px 1px 0 8px; background: #e7e7e7; border-top: 1px solid #dcdcdc; box-shadow: inset 0 2px 2px #dedede; }
.namebox { position: relative; width: 149px; height: 24px; }
.namebox input { width: 100%; height: 24px; border: 1px solid #cbcbcb; border-radius: 4px; padding: 2px 12px 0 0; background: #fff; text-align: center; font: 13px "Liberation Mono", monospace; color: #333; }
.namebox .ic { position: absolute; right: 3px; top: 11px; }
.find { margin-left: 46px; }
.fx { width: 33px; font: italic 18px "Liberation Serif", serif; color: #444; }
.formula { flex: 1; min-width: 0; height: 24px; border: 1px solid #cbcbcb; border-radius: 4px; padding: 0 11px; background: #fff; font: 15px "Liberation Sans", "Noto Sans CJK SC", sans-serif; color: #111; }

.work { display: flex; flex: 1; min-height: 0; background: #e7e7e7; }
.gridwrap { flex: 1; min-width: 0; overflow: hidden; border-right: 1px solid #cfcfcf; }
table { width: 100%; table-layout: fixed; border-collapse: separate; border-spacing: 0; }
.rh { width: 30px; }
.cc { width: 81px; }
th { height: 17px; padding: 0; background: #e7e7e7; color: #7b7b7b; font: 14px/16px "Liberation Sans", sans-serif; text-align: center; border-right: 1px solid #cdcdcd; border-bottom: 1px solid #b9b9b9; }
tbody th { border-right-color: #b9b9b9; border-bottom-color: #cfcfcf; }
th.hot { background: #d3d3d3; color: #43a547; }
.selall { background: linear-gradient(135deg, transparent 50%, #b4b4b4 50%) 18px 5px / 8px 8px no-repeat #e7e7e7; }
td { height: 17px; padding: 2px 0 0 2px; overflow: hidden; white-space: nowrap; background: #fff; color: #000; font: 13px/14px "Liberation Sans", "Noto Sans CJK SC", sans-serif; border-right: 1px solid #d2d2d2; border-bottom: 1px solid #d2d2d2; }
th.end, td.end { border-right: 0; }
td.spill { position: relative; overflow: visible; }
td.open { border-right-color: #fff; }
td.sel { position: relative; overflow: visible; }
td.sel::before { content: ""; position: absolute; inset: -2px; border: 3px solid #43a547; border-width: 3px 2px 3px 3px; }
td.sel::after { content: ""; position: absolute; right: -3px; bottom: -3px; width: 5px; height: 5px; background: #43a547; box-shadow: -1px -1px #fff; }
.vscroll { display: flex; flex-direction: column; flex: none; width: 16px; padding-left: 2px; background: #e7e7e7; }
.split { height: 4px; margin: 5px 2px; border: solid #aaa; border-width: 1px 0; }
.arrow { height: 20px; background: #dedede; }
.arrow.low { height: 32px; padding-top: 12px; }
.thumb { flex: 1; border: 1px solid #a2a2a2; border-radius: 7px; background: #f3f3f3; box-shadow: 0 0 0 1px #dedede; }
.tri { width: 0; height: 0; border: 3px solid transparent; border-top: 0; border-bottom-color: #777; }
.tri.dn { transform: rotate(180deg); }
.tri.lf { border: 3px solid transparent; border-left: 0; border-right-color: #777; }

.sheetbar { display: flex; flex: none; height: 22px; background: #e7e7e7; border-top: 1px solid #cfcfcf; }
.navs { display: flex; width: 120px; padding-left: 7px; }
.navs button { width: 26px; }
.sheettab { width: 71px; padding-left: 4px; background: #fff; border-right: 1px solid #cfcfcf; color: #43a547; font-weight: 700; }
.addsheet { width: 26px; }
.hsplit { width: 4px; height: 10px; margin: 5px 6px 0 82px; border: solid #aaa; border-width: 0 1px; }
.hscroll { display: flex; flex: 1; height: 14px; margin: 3px 23px 0 0; background: #dedede; }
.hscroll button { width: 19px; }
.hthumb { flex: 1; margin-right: 77px; border: 1px solid #a2a2a2; border-radius: 7px; background: #f3f3f3; }

.status { display: flex; flex: none; align-items: center; height: 28px; padding-right: 16px; color: #666; }
.bot { width: 47px; height: 24px; border-right: 1px solid #ddd; }
.prot { display: flex; align-items: center; gap: 5px; height: 24px; padding: 0 12px; border-right: 1px solid #ddd; }
.views { display: flex; align-items: center; margin-left: auto; height: 24px; padding-right: 9px; border-right: 1px solid #ddd; gap: 3px; }
.views button { width: 24px; height: 24px; }
.views .on { background: #c3c3c3; border-radius: 3px; }
.views .brk { width: 28px; gap: 2px; }
.zoombox { display: flex; align-items: center; gap: 11px; padding-left: 10px; }
.pct .ic { margin-left: 6px; }
input[type="range"] { appearance: none; width: 138px; height: 14px; margin: 0; background: linear-gradient(90deg, #777 50%, #c4c4c4 50%) center / 100% 1px no-repeat; }
input[type="range"]::-webkit-slider-thumb { appearance: none; width: 12px; height: 12px; border: 1px solid #555; border-radius: 50%; background: #f3f3f3; }

.taskbar { position: relative; display: flex; flex: none; height: 40px; background: linear-gradient(170deg, #050606, #0b0c0c 40%, #030303 60%, #0d0d0e); color: #fff; }
.t { width: 48px; height: 40px; }
.apps { display: flex; gap: 1px; margin-left: 3px; }
.t.open { border-bottom: 2px solid #76b9ed; padding-top: 2px; width: 40px; margin: 0 4px; }
.t.current { width: 48px; margin: 0; background: #3b3d3f; }
.tray { display: flex; align-items: center; margin-left: auto; gap: 7px; }
.zh { width: 16px; margin-right: 5px; font-size: 14px; text-align: center; }
.clock { display: flex; flex-direction: column; width: 78px; margin-right: 3px; line-height: 19px; text-align: center; }
.peek { width: 1px; height: 40px; margin: 0 4px 0 12px; background: #555; }
.mark { position: absolute; right: 10px; top: 11px; font: 16px/20px "Liberation Sans", sans-serif; color: rgba(200, 200, 200, 0.7); }

.ime { position: absolute; right: 23px; bottom: 68px; display: flex; width: 210px; height: 30px; background: #3f3f3f; color: #e6e6e6; border-radius: 2px; }
.ime span { flex: 1; display: flex; align-items: center; justify-content: center; }
.gauge { position: absolute; right: 2px; bottom: 263px; width: 8px; height: 57px; padding: 42px 1px 1px; border-radius: 4px; background: #5b5b5b; }
.gauge i { display: block; height: 14px; background: repeating-linear-gradient(#3ee06c 0 1px, #3a7a48 1px 2px); }
</style>
